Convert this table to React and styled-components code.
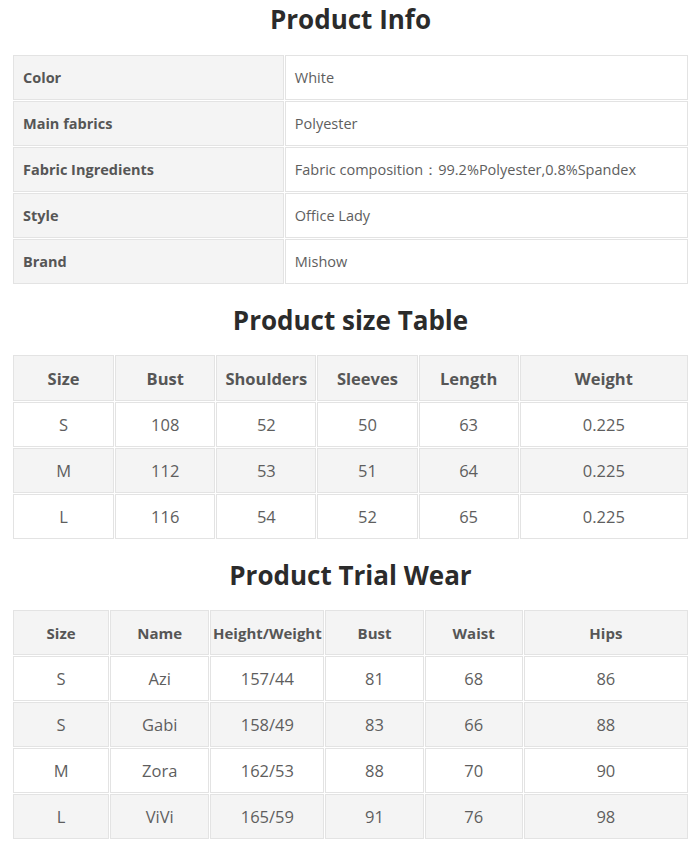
import React from "react";
import styled, { createGlobalStyle } from "styled-components";

const Global = createGlobalStyle`
  html, body { margin: 0; padding: 0; background: #fff; }
  body { font-family: "Open Sans", "Noto Sans", "Liberation Sans", sans-serif; color: #555; }
`;

const Page = styled.div`
  width: 675px;
  padding: 0 12px 0 13px;
  display: flex;
  flex-direction: column;
`;

const Title = styled.h2`
  margin: ${(p) => (p.$first ? "0" : "16px")} 0 15px;
  height: 40px;
  line-height: ${(p) => (p.$first ? "38px" : "40px")};
  text-align: center;
  font-size: 26px;
  font-weight: 700;
  color: #2b2b2b;
`;

const Table = styled.table`
  table-layout: fixed;
  border-collapse: separate;
  border-spacing: 1px;
  margin: -1px;
  width: 677px;
`;

const Row = styled.tr`
  background: ${(p) => (p.$grey ? "#f4f4f4" : "#fff")};
`;

const Cell = styled.td`
  height: ${(p) => (p.$tall ? "44px" : "43px")};
  padding: 0 ${(p) => (p.$left ? "9px" : "0")};
  border: 1px solid #e3e3e3;
  text-align: ${(p) => (p.$left ? "left" : "center")};
  font-size: ${(p) => p.$size || "15px"};
  font-weight: ${(p) => (p.$bold ? 700 : 400)};
  color: ${(p) => (p.$bold ? "#565656" : "#5e5e5e")};
  background: ${(p) => (p.$grey ? "#f4f4f4" : "transparent")};
  white-space: nowrap;
  overflow: hidden;
  box-sizing: content-box;
`;

const info = [
  ["Color", "White"],
  ["Main fabrics", "Polyester"],
  ["Fabric Ingredients", "Fabric composition\uFF1A99.2%Polyester,0.8%Spandex"],
  ["Style", "Office Lady"],
  ["Brand", "Mishow"],
];

const sizeCols = [101, 100, 100, 100, 100, 168];
const sizeHead = ["Size", "Bust", "Shoulders", "Sleeves", "Length", "Weight"];
const sizeRows = [
  ["S", "108", "52", "50", "63", "0.225"],
  ["M", "112", "53", "51", "64", "0.225"],
  ["L", "116", "54", "52", "65", "0.225"],
];

const trialCols = [96, 99, 114, 98, 98, 164];
const trialHead = ["Size", "Name", "Height/Weight", "Bust", "Waist", "Hips"];
const trialRows = [
  ["S", "Azi", "157/44", "81", "68", "86"],
  ["S", "Gabi", "158/49", "83", "66", "88"],
  ["M", "Zora", "162/53", "88", "70", "90"],
  ["L", "ViVi", "165/59", "91", "76", "98"],
];

function DataTable({ cols, head, rows, headSize, bodySize, tallHead }) {
  return (
    <Table>
      <colgroup>
        {cols.map((w, i) => (
          <col key={i} style={{ width: w }} />
        ))}
      </colgroup>
      <tbody>
        <Row $grey>
          {head.map((h) => (
            <Cell key={h} $bold $tall={tallHead} $size={headSize}>
              {h}
            </Cell>
          ))}
        </Row>
        {rows.map((r, i) => (
          <Row key={i} $grey={i % 2 === 1}>
            {r.map((c, j) => (
              <Cell key={j} $size={bodySize}>
                {c}
              </Cell>
            ))}
          </Row>
        ))}
      </tbody>
    </Table>
  );
}

export default function App() {
  return (
    <>
      <Global />
      <Page>
        <Title $first>Product Info</Title>
        <Table>
          <colgroup>
            <col style={{ width: 270 }} />
            <col style={{ width: 402 }} />
          </colgroup>
          <tbody>
            {info.map(([k, v]) => (
              <Row key={k}>
                <Cell $left $bold $grey $size="14.5px">
                  {k}
                </Cell>
                <Cell $left $size="14.5px">
                  {v}
                </Cell>
              </Row>
            ))}
          </tbody>
        </Table>
        <Title>Product size Table</Title>
        <DataTable cols={sizeCols} head={sizeHead} rows={sizeRows} headSize="16.5px" bodySize="16.5px" tallHead />
        <Title>Product Trial Wear</Title>
        <DataTable cols={trialCols} head={trialHead} rows={trialRows} headSize="15px" bodySize="16.5px" />
      </Page>
    </>
  );
}
